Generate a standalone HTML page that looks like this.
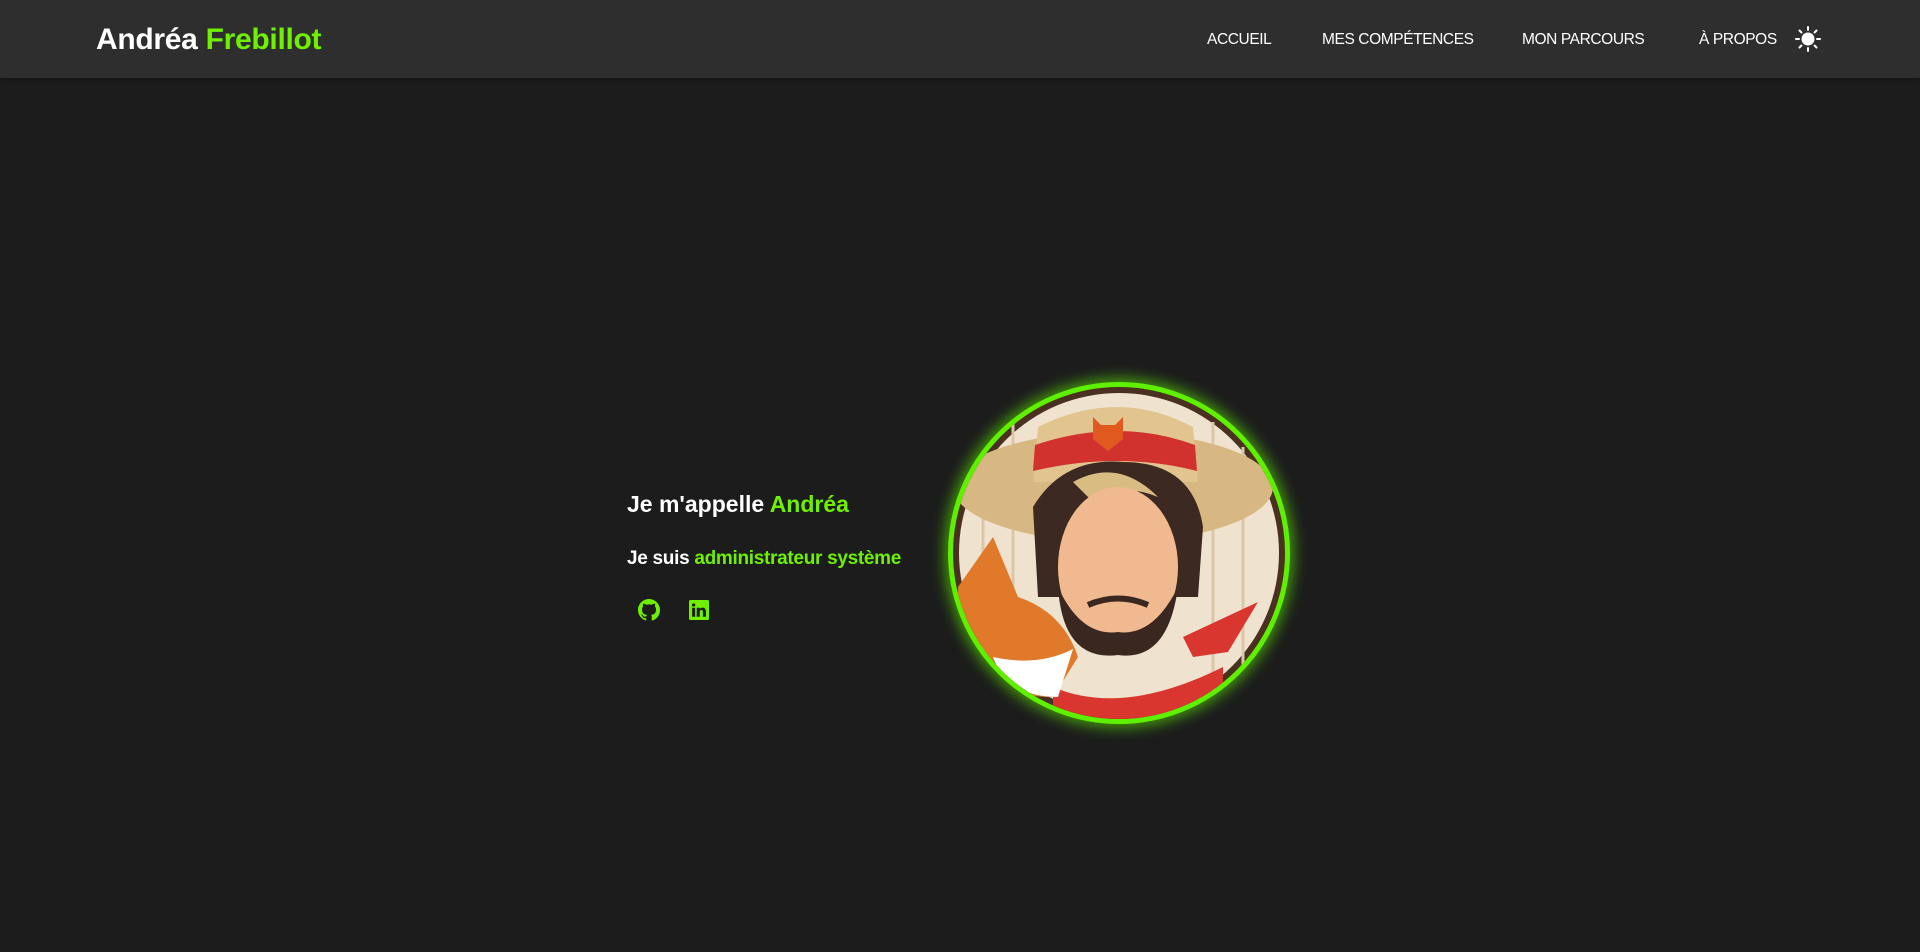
<!DOCTYPE html>
<html><head><meta charset="utf-8"><style>
*{margin:0;padding:0;box-sizing:border-box}
body{width:1920px;height:952px;background:#1c1c1c;font-family:"Liberation Sans",sans-serif;color:#fff;overflow:hidden;position:relative}
header{position:absolute;left:0;top:0;width:1920px;height:78px;background:#2e2e2e;box-shadow:0 2px 6px rgba(0,0,0,.3)}
.logo{position:absolute;left:96px;top:23px;font-size:30px;font-weight:bold;letter-spacing:-0.3px}
.g{color:#6ef000}
nav{position:absolute;top:31px;font-size:15.5px;letter-spacing:-0.4px}
h1{position:absolute;left:627px;top:491px;font-size:23px;font-weight:bold}
h2{position:absolute;left:627px;top:548px;font-size:19px;font-weight:bold;letter-spacing:-0.3px}
.pic{position:absolute;left:948px;top:382px;width:342px;height:342px;border-radius:50%;border:5px solid #5ff000;box-shadow:0 0 14px 4px rgba(100,255,0,.55);overflow:hidden;background:#4a3020}
</style></head><body>
<header>
<div class="logo">Andréa <span class="g">Frebillot</span></div>
<nav style="left:1207px">ACCUEIL</nav>
<nav style="left:1322px">MES COMPÉTENCES</nav>
<nav style="left:1522px">MON PARCOURS</nav>
<nav style="left:1699px">À PROPOS</nav>
<svg style="position:absolute;left:1795px;top:26px" width="26" height="26" viewBox="0 0 26 26" fill="none" stroke="#fff" stroke-width="2" stroke-linecap="round"><circle cx="13" cy="13" r="5.5" fill="#fff"/><path d="M13 1v3M13 22v3M1 13h3M22 13h3M4.5 4.5l2 2M19.5 19.5l2 2M4.5 21.5l2-2M19.5 6.5l2-2"/></svg>
</header>
<h1>Je m'appelle <span class="g">Andréa</span></h1>
<h2>Je suis <span class="g">administrateur système</span></h2>
<svg style="position:absolute;left:638px;top:599px" width="22" height="22" viewBox="0 0 16 16" fill="#6ef000"><path d="M8 0C3.58 0 0 3.58 0 8c0 3.54 2.290 6.53 5.47 7.590.4.07.55-.17.55-.38v-1.33c-2.230.48-2.700-1.070-2.700-1.070-.36-.92-.89-1.170-.89-1.170-.73-.5.06-.49.06-.49.8.06 1.230.83 1.230.83.71 1.230 1.870.87 2.330.67.07-.52.28-.87.51-1.070-1.780-.2-3.640-.89-3.640-3.950 0-.87.31-1.590.82-2.150-.08-.2-.36-1.020.08-2.120 0 0 .67-.21 2.200.82a7.600 7.600 0 014 0c1.530-1.040 2.200-.82 2.200-.82.44 1.100.16 1.920.08 2.120.51.56.82 1.270.82 2.150 0 3.070-1.870 3.750-3.650 3.950.29.25.54.73.54 1.480v2.200c0 .21.15.46.55.38A8.010 8.010 0 0016 8c0-4.420-3.580-8-8-8z"/></svg>
<svg style="position:absolute;left:689px;top:600px" width="20" height="20" viewBox="0 0 16 16" fill="#6ef000"><path d="M0 1.15C0 .52.52 0 1.15 0h13.7C15.48 0 16 .52 16 1.15v13.7c0 .63-.52 1.15-1.150 1.150H1.150C.52 16 0 15.480 0 14.850zM4.9 13.4V6.2H2.5v7.2zM3.7 5.2c.84 0 1.36-.55 1.36-1.25-.02-.71-.52-1.25-1.34-1.25S2.35 3.24 2.35 3.95c0 .7.52 1.25 1.33 1.25zm4.9 8.2V9.4c0-.22.02-.43.08-.58.17-.43.57-.88 1.23-.88.87 0 1.22.66 1.22 1.64v3.85h2.4V9.3c0-2.2-1.18-3.23-2.75-3.23-1.27 0-1.84.7-2.16 1.19V6.2H6.2c.03.67 0 7.2 0 7.2z"/></svg>
<div class="pic">
<svg width="332" height="332" viewBox="0 0 332 332">
<circle cx="166" cy="166" r="160" fill="#efe3cf"/>
<path d="M30 60v240M60 35v270M260 35v270M290 60v240" stroke="#d9c7a8" stroke-width="3"/>
<ellipse cx="160" cy="100" rx="160" ry="55" fill="#d8b882"/>
<path d="M85 40 Q165 0 240 40 L245 95 L80 95Z" fill="#e2c48e"/>
<path d="M82 58 Q165 30 242 58 L244 84 Q165 64 80 84Z" fill="#d2322e"/>
<path d="M140 30 l8 8 h14 l8-8 v22 l-15 12 l-15-12z" fill="#e05a20"/>
<path d="M80 120 Q110 70 170 75 Q240 75 250 140 L245 210 L85 210Z" fill="#3c2a22"/>
<path d="M120 95 Q165 70 205 110 Q170 95 140 115Z" fill="#d9bc82"/>
<ellipse cx="165" cy="180" rx="60" ry="80" fill="#f0b98f"/>
<path d="M105 200 Q110 275 165 268 Q215 275 225 200 Q200 250 165 245 Q128 250 105 200Z" fill="#3a2820"/>
<path d="M135 218 Q165 205 195 218" stroke="#3a2820" stroke-width="6" fill="none"/>
<path d="M100 300 Q170 330 270 280 L270 332 L100 332Z" fill="#d8362e"/>
<path d="M5 200 L40 150 L65 210 Q110 225 125 270 L100 310 Q40 310 5 270Z" fill="#e07a2a"/>
<path d="M40 270 Q85 280 120 262 L105 310 Q55 310 40 270Z" fill="#fff"/>
<path d="M230 250 L305 215 L275 265 L240 270Z" fill="#d8362e"/>
</svg>
</div>
</body></html>
